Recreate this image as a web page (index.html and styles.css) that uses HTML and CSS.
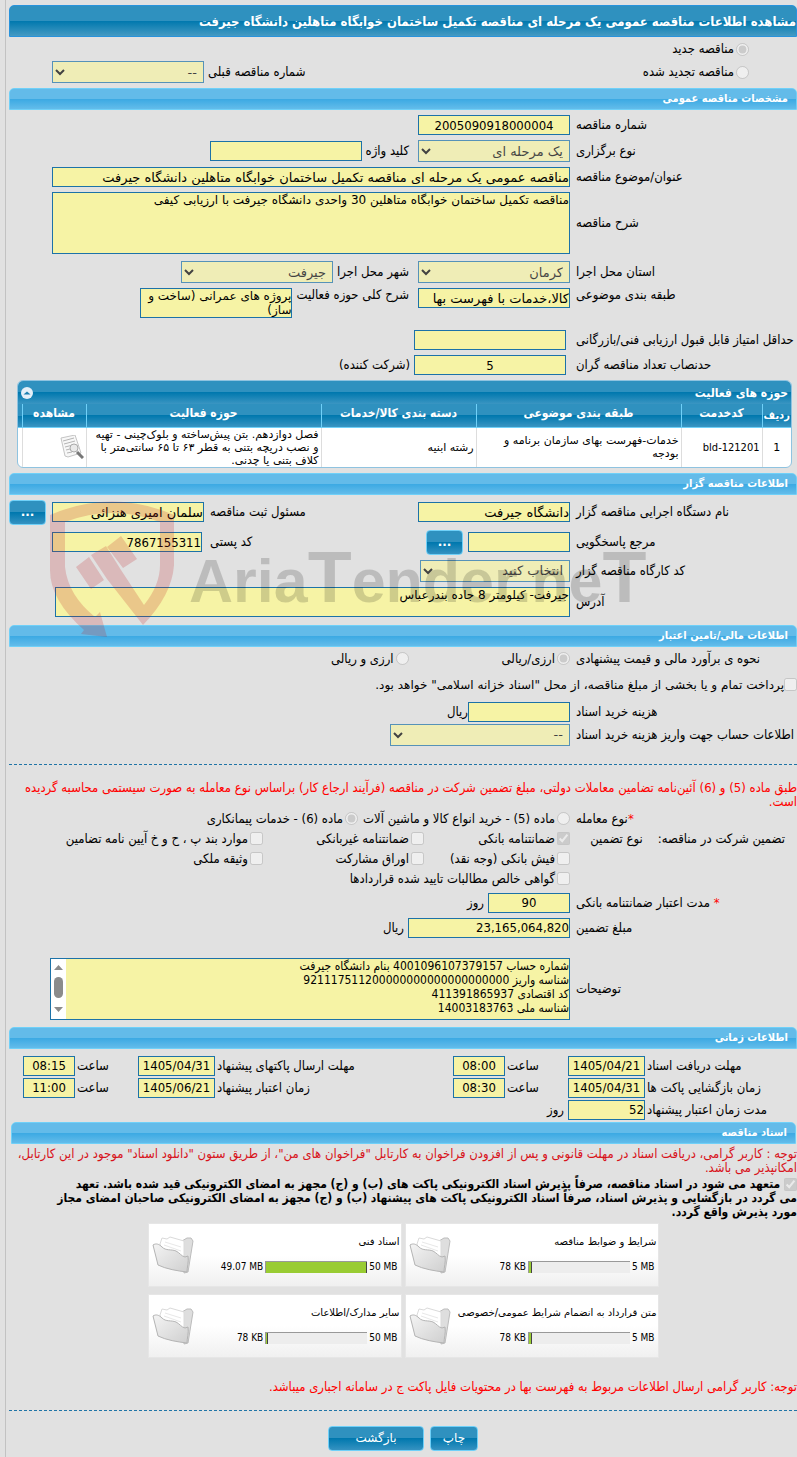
FILE: index.html
```html
<!DOCTYPE html>
<html lang="fa" dir="rtl">
<head>
<meta charset="utf-8">
<meta name="viewport" content="width=device-width, initial-scale=1">
<title>مشاهده اطلاعات مناقصه عمومی</title>
<link rel="stylesheet" href="styles.css">
</head>
<body>
<svg class="defs" width="0" height="0" aria-hidden="true">
  <defs>
    <linearGradient id="fold" x1="0" y1="0" x2="1" y2="1"><stop offset="0" stop-color="#f4f4f4"/><stop offset="1" stop-color="#cfcfcf"/></linearGradient>
    <symbol id="folder" viewBox="0 0 42 38">
      <path d="M30 5l5-3 4 0 2 3-5 31-4 1z" fill="#dedede" stroke="#bcbcbc"/>
      <path d="M8 8l2-6 5 1 3-2 14 4 0 25-18-4z" fill="#fff" stroke="#dadada"/>
      <path d="M13 6l16 5M12 9l17 6" stroke="#e8e8e8" fill="none"/>
      <path d="M1 9c3-2 6-1 9 2 4 4 9 2 14 4 4 2 5 5 9 6l3-1c1 6-1 11-1 16-9-1-21-3-29-7z" fill="url(#fold)" stroke="#b4b4b4"/>
    </symbol>
  </defs>
</svg>
<main class="page">
  <h1 class="title">مشاهده اطلاعات مناقصه عمومی یک مرحله ای مناقصه تکمیل ساختمان خوابگاه متاهلین دانشگاه جیرفت</h1>
  <section class="kind">
    <div class="row"><label class="opt opt-kind"><input type="radio" name="kind" checked disabled>مناقصه جدید</label></div>
    <div class="row"><label class="opt opt-kind"><input type="radio" name="kind" disabled>مناقصه تجدید شده</label>
      <span class="pair pair-end"><label for="prev">شماره مناقصه قبلی</label><select id="prev" class="w152" disabled><option>--</option></select></span></div>
  </section>

  <h2 class="bar">مشخصات مناقصه عمومی</h2>
  <section class="form">
    <div class="row"><label class="lead" for="num">شماره مناقصه</label><input id="num" class="w152 num center" value="2005090918000004" readonly></div>
    <div class="row"><label class="lead" for="mode">نوع برگزاری</label><select id="mode" class="w152" disabled><option>یک مرحله ای</option></select>
      <span class="pair"><label for="key">کلید واژه</label><input id="key" class="w152" readonly></span></div>
    <div class="row wide"><label class="lead" for="subj">عنوان/موضوع مناقصه</label><input id="subj" class="grow" value="مناقصه عمومی یک مرحله ای مناقصه تکمیل ساختمان خوابگاه متاهلین دانشگاه جیرفت" readonly></div>
    <div class="row wide"><label class="lead" for="desc">شرح مناقصه</label><textarea id="desc" class="grow tall" readonly>مناقصه تکمیل ساختمان خوابگاه متاهلین 30 واحدی دانشگاه جیرفت با ارزیابی کیفی</textarea></div>
    <div class="row"><label class="lead" for="prov">استان محل اجرا</label><select id="prov" class="w152" disabled><option>کرمان</option></select>
      <span class="pair"><label for="city">شهر محل اجرا</label><select id="city" class="w152" disabled><option>جیرفت</option></select></span></div>
    <div class="row top"><label class="lead" for="cls">طبقه بندی موضوعی</label><input id="cls" class="w152" value="کالا،خدمات با فهرست بها" readonly>
      <span class="pair top"><label for="act">شرح کلی حوزه فعالیت</label><textarea id="act" class="w152 short" readonly>پروژه های عمرانی (ساخت و ساز)</textarea></span></div>
    <div class="row spaced"><label class="lead lead-gap" for="minsc">حداقل امتیاز قابل قبول ارزیابی فنی/بازرگانی</label><input id="minsc" class="w152" readonly></div>
    <div class="row"><label class="lead lead-gap" for="quorum">حدنصاب تعداد مناقصه گران</label><input id="quorum" class="w152 num center" value="5" readonly><span class="unit">(شرکت کننده)</span></div>
  </section>

  <section class="panel">
    <div class="panel-head"><span>حوزه های فعالیت</span>
      <button class="fold" type="button" aria-label="بستن"><svg viewBox="0 0 12 12"><path d="M2.500 7.500L6 4.500l3.500 3z" fill="#1b7fb0"/></svg></button></div>
    <table class="grid">
      <colgroup><col class="c1"><col class="c2"><col class="c3"><col class="c4"><col class="c5"><col class="c6"><col class="c7"></colgroup>
      <thead><tr><th>ردیف</th><th>کدخدمت</th><th>طبقه بندی موضوعی</th><th>دسته بندی کالا/خدمات</th><th>حوزه فعالیت</th><th>مشاهده</th><th></th></tr></thead>
      <tbody><tr><td class="mid">1</td><td class="code">bld-121201</td><td>خدمات-فهرست بهای سازمان برنامه و بودجه</td><td>رشته ابنیه</td><td>فصل دوازدهم. بتن پیش‌ساخته و بلوک‌چینی - تهیه و نصب دریچه بتنی به قطر ۶۳ تا ۶۵ سانتی‌متر با کلاف بتنی یا چدنی.</td>
      <td class="view"><svg width="24" height="24" viewBox="0 0 24 24"><path d="M1 3l14-3 6 18-13 4-3-1z" fill="#f7f7f7" stroke="#c4c4c4"/><path d="M3 6l11-3M4 9l11-3M5 12l8-2M6 15l4-1M7 18l5-1" stroke="#b5b5b5"/><circle cx="14" cy="13" r="4" fill="#e9e9e9" stroke="#aaa"/><path d="M17 17l6 6" stroke="#777" stroke-width="3"/></svg></td><td></td></tr></tbody>
    </table>
  </section>

  <h2 class="bar">اطلاعات مناقصه گزار</h2>
  <section class="owner">
    <div class="row"><label class="lead" for="org">نام دستگاه اجرایی مناقصه گزار</label><input id="org" class="w152" value="دانشگاه جیرفت" readonly>
      <span class="pair pair-btn"><label for="reg">مسئول ثبت مناقصه</label><input id="reg" class="w152" value="سلمان امیری هنزائی" readonly><button class="btn dots" type="button">...</button></span></div>
    <div class="row"><label class="lead" for="resp">مرجع پاسخگویی</label><input id="resp" class="w102" readonly><button class="btn dots" type="button">...</button>
      <span class="pair pair-end"><label class="post" for="zip">کد پستی</label><input id="zip" class="w150 num" value="7867155311" readonly></span></div>
    <div class="row"><label class="lead" for="shop">کد کارگاه مناقصه گزار</label><select id="shop" class="w150" disabled><option>انتخاب کنید</option></select></div>
    <div class="row wide addr"><label class="lead" for="addr">آدرس</label><textarea id="addr" class="grow short" readonly>جیرفت- کیلومتر 8 جاده بندرعباس</textarea></div>
    <svg class="mark" viewBox="0 0 610 140" aria-hidden="true">
      <g fill="#c0181c" fill-opacity=".2">
        <path d="M0 15Q62-12 124 15V65Q122 95 93 125L57 79 41 55 56 46 71 70 94 105Q110 85 110 65V22Q62 4 15 22V67Q18 95 45 117L50 112 57 137 31 134 34 130Q0 100 0 70Z"/>
        <path d="M26 67l13-10 15 23-13 9zM57 47l14-11 16 23-14 9z"/>
      </g>
      <text class="mark-text" x="139" y="102" direction="ltr">Aria<tspan class="mark-big">T</tspan>ender.ne<tspan class="mark-big">T</tspan></text>
    </svg>
  </section>

  <h2 class="bar">اطلاعات مالی/تامین اعتبار</h2>
  <section class="money">
    <div class="row"><span class="lead">نحوه ی برآورد مالی و قیمت پیشنهادی</span><label class="opt opt-cur"><input type="radio" name="cur" checked disabled>ارزی/ریالی</label><label class="opt"><input type="radio" name="cur" disabled>ارزی و ریالی</label></div>
    <div class="row pay"><label class="opt"><input type="checkbox" disabled>پرداخت تمام و یا بخشی از مبلغ مناقصه، از محل "اسناد خزانه اسلامی" خواهد بود.</label></div>
    <div class="row"><label class="lead" for="fee">هزینه خرید اسناد</label><input id="fee" class="w102" readonly><span>ریال</span></div>
    <div class="row acc"><label class="lead" for="acc">اطلاعات حساب جهت واریز هزینه خرید اسناد</label><select id="acc" class="w180" disabled><option>--</option></select></div>
  </section>
  <hr class="dash">
  <section class="bond">
    <p class="note">طبق ماده (5) و (6) آئین‌نامه تضامین معاملات دولتی، مبلغ تضمین شرکت در مناقصه (فرآیند ارجاع کار) براساس نوع معامله به صورت سیستمی محاسبه گردیده است.</p>
    <div class="row"><span class="lead"><b class="star">*</b>نوع معامله</span><label class="opt opt-deal"><input type="radio" name="deal" disabled>ماده (5) - خرید انواع کالا و ماشین آلات</label><label class="opt"><input type="radio" name="deal" checked disabled>ماده (6) - خدمات پیمانکاری</label></div>
    <div class="checks">
      <span class="checks-lead"><span>تضمین شرکت در مناقصه:</span><span>نوع تضمین</span></span>
      <label class="opt"><input type="checkbox" checked disabled>ضمانتنامه بانکی</label><label class="opt"><input type="checkbox" disabled>ضمانتنامه غیربانکی</label><label class="opt"><input type="checkbox" disabled>موارد بند پ ، ح و خ آیین نامه تضامین</label>
      <label class="opt col2"><input type="checkbox" disabled>فیش بانکی (وجه نقد)</label><label class="opt"><input type="checkbox" disabled>اوراق مشارکت</label><label class="opt"><input type="checkbox" disabled>وثیقه ملکی</label>
      <label class="opt col2 span"><input type="checkbox" disabled>گواهی خالص مطالبات تایید شده قراردادها</label>
    </div>
    <div class="form amounts">
      <div class="row"><label class="lead" for="days"><b class="star">*</b> مدت اعتبار ضمانتنامه بانکی</label><input id="days" class="w82 num center" value="90" readonly><span class="unit">روز</span></div>
      <div class="row"><label class="lead" for="amt">مبلغ تضمین</label><input id="amt" class="w162 num" value="23,165,064,820" readonly><span class="unit">ریال</span></div>
    </div>
    <div class="row wide notes"><label class="lead" for="notes">توضیحات</label>
      <span class="scrollbox grow"><textarea id="notes" readonly>شماره حساب 4001096107379157 بنام دانشگاه جیرفت
شناسه واریز 921117511200000000000000000000
کد اقتصادی 411391865937
شناسه ملی 14003183763</textarea><svg class="scroll" viewBox="0 0 15 60" aria-hidden="true"><path d="M3 11l4.500-5 4.500 5zM3 48h9l-4.500 5z" fill="#8b8b8b"/><rect x="3" y="18" width="9" height="21" rx="4.500" fill="#8b8b8b"/></svg></span></div>
  </section>

  <h2 class="bar">اطلاعات زمانی</h2>
  <section class="times">
    <label for="t1">مهلت دریافت اسناد</label><input id="t1" class="num center" value="1405/04/21" readonly><label for="h1">ساعت</label><input id="h1" class="num center" value="08:00" readonly>
    <label for="t2">مهلت ارسال پاکتهای پیشنهاد</label><input id="t2" class="num center" value="1405/04/31" readonly><label for="h2">ساعت</label><input id="h2" class="num center" value="08:15" readonly>
    <label for="t3">زمان بازگشایی پاکت ها</label><input id="t3" class="num center" value="1405/04/31" readonly><label for="h3">ساعت</label><input id="h3" class="num center" value="08:30" readonly>
    <label for="t4">زمان اعتبار پیشنهاد</label><input id="t4" class="num center" value="1405/06/21" readonly><label for="h4">ساعت</label><input id="h4" class="num center" value="11:00" readonly>
    <label for="t5">مدت زمان اعتبار پیشنهاد</label><input id="t5" class="num" value="52" readonly><span class="day">روز</span>
  </section>

  <h2 class="bar bar-in">اسناد مناقصه</h2>
  <section class="docs">
    <p class="warn">توجه : کاربر گرامی، دریافت اسناد در مهلت قانونی و پس از افزودن فراخوان به کارتابل "فراخوان های من"، از طریق ستون "دانلود اسناد" موجود در این کارتابل، امکانپذیر می باشد.</p>
    <p class="pledge"><input id="pledge" type="checkbox" checked disabled><label for="pledge"> متعهد می شود در اسناد مناقصه، صرفاً پذیرش اسناد الکترونیکی پاکت های (ب) و (ج) مجهز به امضای الکترونیکی قید شده باشد. تعهد<br>می گردد در بازگشایی و پذیرش اسناد، صرفاً اسناد الکترونیکی پاکت های پیشنهاد (ب) و (ج) مجهز به امضای الکترونیکی صاحبان امضای مجاز<br>مورد پذیرش واقع گردد.</label></p>
    <div class="cards">
      <article class="card"><div class="info"><h3>شرایط و ضوابط مناقصه</h3><div class="usage"><span>5 MB</span><span class="meter"><span class="fill" style="width:3px"></span></span><span>78 KB</span></div></div><svg class="icon"><use href="#folder"/></svg></article>
      <article class="card"><div class="info"><h3>اسناد فنی</h3><div class="usage"><span>50 MB</span><span class="meter"><span class="fill" style="width:100%"></span></span><span>49.07 MB</span></div></div><svg class="icon"><use href="#folder"/></svg></article>
      <article class="card"><div class="info"><h3>متن قرارداد به انضمام شرایط عمومی/خصوصی</h3><div class="usage"><span>5 MB</span><span class="meter"><span class="fill" style="width:3px"></span></span><span>78 KB</span></div></div><svg class="icon"><use href="#folder"/></svg></article>
      <article class="card"><div class="info"><h3>سایر مدارک/اطلاعات</h3><div class="usage"><span>50 MB</span><span class="meter"><span class="fill" style="width:2px"></span></span><span>78 KB</span></div></div><svg class="icon"><use href="#folder"/></svg></article>
    </div>
    <p class="last">توجه: کاربر گرامی ارسال اطلاعات مربوط به فهرست بها در محتویات فایل پاکت ج در سامانه اجباری میباشد.</p>
  </section>
  <hr class="dash">
  <footer class="actions"><button class="btn print" type="button">چاپ</button><button class="btn back" type="button">بازگشت</button></footer>
</main>
</body>
</html>
```
FILE: styles.css
```css
* { box-sizing: border-box; }
body { margin: 0; background: #e1e1e1; color: #000; font: 13px/14px "DejaVu Sans Condensed", "DejaVu Sans", sans-serif; overflow-x: hidden; }
.defs { position: absolute; }
.page { min-height: 100vh; margin-left: 5px; border-left: 1px solid #c2c2c2; padding: 5px 0 5px 3px; }
h1, h2, h3, p { margin: 0; }
input, select, textarea, button { font-family: "DejaVu Sans", sans-serif; margin: 0; }
input:not([type]), select, textarea { background: #f6f3a5; color: #000; border: 1px solid #1c72a8; border-radius: 0; padding: 0; font-size: 13px; outline: 0; flex-shrink: 0; }
input:not([type]) { height: 20px; }
input.num, #notes { font-family: "DejaVu Sans Condensed", "DejaVu Sans", sans-serif; }
select { height: 22px; padding: 0 2px; }
textarea { display: block; resize: none; overflow: hidden; font-size: 12px; line-height: 14px; }
input[type="radio"], input[type="checkbox"] { width: 13px; height: 13px; flex: none; }
.center { text-align: center; }

.title { height: 32px; padding-top: 1px; border: 1px solid #2893dc; border-radius: 5px 5px 0 0; background: linear-gradient(#2f91bf 0 50%, #0078ae 50%, #449ac3); color: #fff; font-size: 13px; line-height: 30px; font-weight: bold; white-space: nowrap; }
.bar { height: 22px; padding: 0 8px; border: 1px solid #6fd0f8; border-radius: 5px 5px 0 0; background: linear-gradient(#63bbe9 0 50%, #3ba9e3 50%, #63bcea); color: #fff; font-size: 11px; line-height: 20px; font-weight: bold; }
.bar-in { margin: 0 1px 0 2px; }

.row { display: flex; align-items: center; min-height: 20px; }
.row.top, .pair.top { align-items: flex-start; }
.lead { width: 221px; flex: none; text-align: left; margin-left: 6px; white-space: nowrap; }
.lead-gap { margin-left: 10px; }
.pair { display: flex; align-items: center; gap: 4px; margin-right: 9px; white-space: nowrap; }
.pair-end { margin-right: auto; margin-left: 43px; }
.pair-btn { margin-right: auto; gap: 6px; }
.wide { padding-left: 43px; }
.unit { margin-right: 4px; }
.grow { flex: 1; min-width: 0; }
.w82 { width: 82px; }
.w102 { width: 102px; }
.w150 { width: 150px; }
.w152 { width: 152px; }
.w162 { width: 162px; }
.w180 { width: 180px; }
.tall { height: 62px; }
.short { height: 30px; }
.spaced { margin-top: 7px; }
.opt { display: flex; align-items: center; gap: 2px; white-space: nowrap; }

.kind { display: grid; gap: 1px; padding: 1px 0 5px; }
.kind .row { min-height: 22px; }
.opt-kind { margin-right: 48px; }
.form { display: grid; gap: 5px; padding: 5px 0; }
.form .row:nth-child(5) { margin-top: 2px; }

.panel { margin: 0 5px 5px 8px; border: 1px solid #8fc3e0; border-radius: 6px; overflow: hidden; background: #fff; }
.panel-head { display: flex; justify-content: space-between; align-items: center; height: 23px; padding: 0 3px; background: linear-gradient(#2f91bf 0 50%, #0078ae 50%, #3a95c2); color: #fff; font-size: 12px; font-weight: bold; }
.fold { width: 12px; height: 12px; padding: 0; border: 0; border-radius: 6px; background: #e4eff8; }
.fold svg { display: block; }
.grid { width: 100%; border-collapse: collapse; table-layout: fixed; font-family: "DejaVu Sans", sans-serif; font-size: 11px; line-height: 13px; }
.grid th { height: 23px; padding: 0 0 3px; border-left: 1px solid #6fd0f8; border-bottom: 1px solid #6fd0f8; background: linear-gradient(#2f91bf 0 50%, #0078ae 50%, #3a95c2); color: #fff; font-family: "DejaVu Sans Condensed", sans-serif; font-size: 12px; white-space: nowrap; }
.grid th:first-child { padding: 0; font-size: 11px; }
.grid td { height: 39px; padding: 0 2px; border-left: 1px solid #ddd; }
.grid th:last-child, .grid td:last-child { border-left: 0; }
.grid .mid { text-align: center; }
.grid .code { font-family: "DejaVu Sans Condensed", sans-serif; }
.grid .view svg { display: block; }
.c1 { width: 29px; } .c2 { width: 81px; } .c3 { width: 205px; } .c4 { width: 155px; } .c5 { width: 235px; } .c7 { width: 4px; }

.btn { height: 25px; padding: 0; border: 1px solid #6fd0f8; border-radius: 4px; background: linear-gradient(#2f91bf 0 50%, #0078ae 50%, #3592c1); color: #fff; font-size: 12px; }
.dots { width: 37px; font-weight: bold; }
.owner { position: relative; display: grid; gap: 5px; padding: 5px 0 8px; }
.owner .row:nth-child(2) .btn { margin-right: 5px; }
.owner .addr { padding-left: 46px; }
.post { margin-left: 4px; }
.mark { position: absolute; left: 41px; top: 5px; width: 610px; height: 140px; pointer-events: none; z-index: 1; }
.mark-text { fill: #000; fill-opacity: .16; font: bold 61px "Liberation Sans", sans-serif; }
.mark-big { font-size: 72px; }

.money { display: grid; padding: 2px 0 18px; }
.pay { margin: 6px 0 7px; }
.pay .opt { font-family: "DejaVu Sans", sans-serif; font-size: 12px; gap: 0; }
.acc { margin-top: 2px; }
.dash { margin: 0; border: 0; border-top: 1px dashed #1f74a6; }
.bond { padding: 16px 0 7px; }
.note, .last { color: #f00; }
.star { color: #f00; font-weight: normal; }
.opt-cur { margin-left: 93px; }
.opt-deal { margin-left: 5px; }
.checks { display: grid; grid-template-columns: 227px 146px 161px 1fr; grid-auto-rows: 20px; align-items: center; }
.checks-lead { display: flex; gap: 15px; padding-right: 12px; white-space: nowrap; }
.col2 { grid-column-start: 2; }
.span { grid-column-end: 5; }
.amounts { padding: 4px 0 20px; }
.notes { padding-left: 41px; }
.scrollbox { display: flex; height: 62px; border: 1px solid #1c72a8; background: #f6f3a5; }
.scrollbox textarea { flex: 1; height: 60px; border: 0; min-width: 0; }
.scroll { width: 15px; background: #fff; }

.times { display: grid; grid-template-columns: 152px 77px 63px 52px 1fr 77px 63px 52px; gap: 2px 0; align-items: center; padding: 7px 0 2px 14px; }
.times label, .day { padding-left: 2px; text-align: left; white-space: nowrap; }
.times input { width: 100%; }
.day { text-align: right; padding-right: 4px; }

.docs { padding: 3px 0 16px; }
.warn { color: #d8121a; }
.pledge { padding-top: 2px; font-size: 12px; font-weight: bold; }
.pledge input { vertical-align: middle; }
.cards { display: grid; grid-template-columns: 254px 254px; justify-content: center; gap: 7px 3px; padding: 4px 0 22px; }
.card { display: flex; justify-content: space-between; height: 64px; padding: 0 1px 0 3px; border: 1px solid #e6e6e6; background: linear-gradient(#fff 50%, #f0f0f0); font-size: 10px; }
.card h3 { font-family: "DejaVu Sans", sans-serif; font-size: 10px; font-weight: normal; padding-top: 11px; white-space: nowrap; }
.usage { display: flex; align-items: center; gap: 2px; margin-top: 11px; padding-right: 2px; }
.usage > span { direction: ltr; white-space: nowrap; }
.meter { width: 102px; height: 12px; border: 1px solid #999; border-width: 1px 0 0 1px; background: #ededed; }
.fill { display: block; height: 11px; background: #9c3; border-right: 1px solid #444; }
.icon { width: 42px; height: 38px; margin-top: 12px; flex: none; }
.actions { display: flex; justify-content: center; gap: 6px; padding-top: 15px; }
.print { width: 48px; }
.back { width: 96px; }
```
